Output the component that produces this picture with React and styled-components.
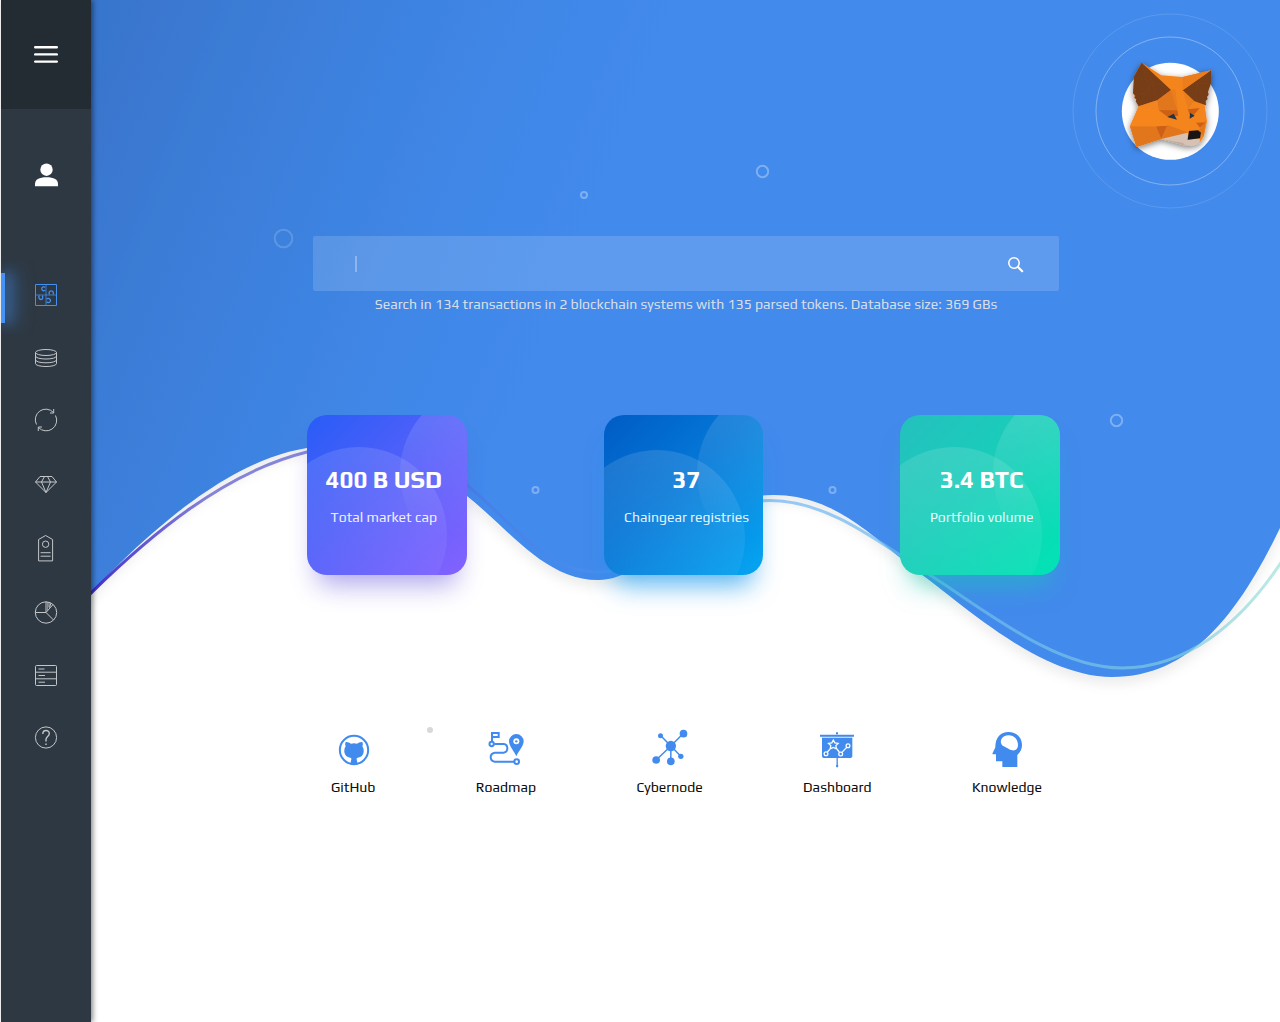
import React from "react";
import styled, { createGlobalStyle, css } from "styled-components";

const GlobalStyle = createGlobalStyle`
  * { box-sizing: border-box; }
  body {
    margin: 0;
    background: #fff;
    font-family: Play, "Noto Sans", "Open Sans", sans-serif;
  }
`;

const Shell = styled.div`
  display: flex;
  height: 1022px;
  padding-left: 1px;
  overflow: hidden;
`;

const Sidebar = styled.aside`
  position: relative;
  z-index: 2;
  flex: 0 0 90px;
  display: flex;
  flex-direction: column;
  background: #2e3842;
  box-shadow: 2px 0 5px rgba(0, 0, 0, 0.45);
`;

const MenuButton = styled.button`
  display: flex;
  align-items: center;
  justify-content: center;
  height: 109px;
  padding: 0;
  border: 0;
  background: #242c33;
`;

const Profile = styled.div`
  display: flex;
  align-items: center;
  justify-content: center;
  height: 132px;
  margin-bottom: 22px;
`;

const SideNav = styled.nav`
  display: flex;
  flex-direction: column;
`;

const SideItem = styled.a`
  display: flex;
  align-items: center;
  justify-content: center;
  height: 63px;
  color: #c3c6c8;
  ${(p) =>
    p.$active &&
    css`
      color: #4290f2;
      &::before {
        content: "";
        position: absolute;
        left: 0;
        width: 4px;
        height: 50px;
        background: #4593f7;
        box-shadow:
          4px 0 12px rgba(69, 147, 247, 0.7),
          6px 0 20px 2px rgba(69, 147, 247, 0.55);
        clip-path: inset(-12px -40px -12px 0);
        transform: translateY(3px);
      }
    `}
`;

const LineIcon = styled.svg`
  width: 28px;
  height: 32px;
  fill: none;
  stroke: currentColor;
  stroke-width: 1;
  overflow: visible;
`;

const Main = styled.main`
  position: relative;
  flex: 1;
`;

const Backdrop = styled.svg`
  position: absolute;
  inset: 0;
  width: 1189px;
  height: 1022px;
`;

const Content = styled.div`
  position: relative;
  display: flex;
  flex-direction: column;
`;

const Header = styled.header`
  display: flex;
  justify-content: flex-end;
  height: 220px;
`;

const Column = styled.div`
  display: flex;
  flex-direction: column;
  width: 753px;
  margin: 16px 0 0 216px;
`;

const SearchBox = styled.div`
  display: flex;
  align-items: center;
  justify-content: space-between;
  width: 746px;
  height: 55px;
  margin-left: 6px;
  padding: 1px 35px 0 42px;
  border-radius: 2px;
  background: rgba(255, 255, 255, 0.15);
`;

const Caret = styled.span`
  width: 2px;
  height: 16px;
  background: rgba(255, 255, 255, 0.3);
`;

const Hint = styled.p`
  margin: 3px 0 0 6px;
  width: 746px;
  height: 20px;
  line-height: 20px;
  text-align: center;
  white-space: nowrap;
  font-size: 14px;
  color: #d9dee6;
`;

const Cards = styled.div`
  display: flex;
  justify-content: space-between;
  margin-top: 101px;
`;

const Card = styled.article`
  position: relative;
  overflow: hidden;
  display: flex;
  flex-direction: column;
  align-items: center;
  width: 159.6px;
  height: 159.6px;
  padding: 49px ${(p) => p.$right}px 0 ${(p) => p.$left}px;
  border-radius: 20px;
  color: #fff;
  white-space: nowrap;
  background: linear-gradient(135deg, ${(p) => p.$colors});
  box-shadow: 0 20px 26px -10px ${(p) => p.$glow};

  &::before,
  &::after {
    content: "";
    position: absolute;
    width: 176px;
    height: 176px;
    border-radius: 50%;
  }
  &::before {
    left: ${(p) => p.$arcLeft}px;
    top: ${(p) => p.$arc}px;
    background: linear-gradient(to bottom, rgba(255, 255, 255, 0.12), rgba(255, 255, 255, 0.04) 75%);
  }
  &::after {
    left: 93px;
    top: -30px;
    background: linear-gradient(to bottom, rgba(255, 255, 255, 0.12) 20%, rgba(255, 255, 255, 0) 85%);
  }
`;

const CardValue = styled.strong`
  position: relative;
  z-index: 1;
  height: 32px;
  line-height: 32px;
  font-size: 24px;
  font-weight: 700;
`;

const CardLabel = styled.span`
  position: relative;
  z-index: 1;
  margin-top: 11px;
  line-height: 20px;
  font-size: 14px;
  color: rgba(255, 255, 255, 0.9);
`;

const Links = styled.nav`
  display: flex;
  gap: 100.7px;
  margin: 153px 0 0 24.2px;
`;

const LinkItem = styled.a`
  display: flex;
  flex-direction: column;
  align-items: center;
  width: ${(p) => p.$width}px;
  color: #0b0b0b;
  font-size: 14px;
  line-height: 20px;
  white-space: nowrap;
`;

const LinkIcon = styled.svg`
  width: 40px;
  height: 42px;
  margin-bottom: 7px;
  overflow: visible;
  color: #428bee;
  fill: currentColor;
`;

const sideIcons = [
  {
    name: "Apps",
    shift: 0,
    art: (
      <>
        <path d="M-10.5-10.5h21v21h-21z" />
        <path d="M-10.500 0h21M0-10.500v21" opacity=".75" />
        <path d="M-1-7.500c-1-1.200-3.300-.6-3.300 1.300s2.500 2.600 3.300 1.200M3.500-.5C2.500-2 3.300-4.200 5.200-4.200S8-2 7-.5M-6.500.5C-8 2-6.800 4.500-5 4.500S-2.500 2-4 .5M.5 4C2 2.800 4.500 3.500 4.500 5.500S2 8.200.5 6.800" strokeWidth="1.300" />
      </>
    ),
  },
  {
    name: "Data",
    shift: 0,
    art: (
      <>
        <ellipse cy="-5.500" rx="10.500" ry="3" />
        <path d="M-10.500-5.500v11c0 4 21 4 21 0v-11M-10.500-2c0 4 21 4 21 0M-10.500 1.800c0 4 21 4 21 0" />
      </>
    ),
  },
  {
    name: "Sync",
    shift: -1,
    art: <path d="M7.500-7.500A10.500 10.500 0 0 0-9.500 4.500M-7.500 7.500A10.500 10.500 0 0 0 9.500-4.500M7.700-11v4H4M-7.700 11V7H-4" />,
  },
  {
    name: "Assets",
    shift: 0.5,
    art: <path d="M-6-8H6l4.500 5.500L0 8-10.500-2.500zM-10.500-2.500h21M-1.500-8L-4.500-2.500 0 8 4.500-2.500 1.500-8" />,
  },
  {
    name: "Token",
    shift: 1.2,
    art: (
      <g transform="translate(-.4 0)">
        <path d="M0-12.700l7 4v21.400H-7V-8.700zM-5 4.500H5M-5 8H5" />
        <circle cy="-4" r="3.200" />
      </g>
    ),
  },
  {
    name: "Portfolio",
    shift: 2.5,
    art: (
      <>
        <circle r="10.700" />
        <path d="M-10.700 0H0L7.500 7.500M0-10.700V0l7-8M3-5v-5.500M5-9.500L3.500-5" />
        <path d="M1.500-10.500V-2" opacity=".6" />
      </>
    ),
  },
  {
    name: "Nodes",
    shift: 2.5,
    art: (
      <>
        <rect x="-10.500" y="-10" width="21" height="20" rx="1" />
        <path d="M-10.500-3.300h21M-10.500 3.300h21M-7.500-6.500h6M-7.500 0h6.500M-7.500 6.700h6.500" />
      </>
    ),
  },
  {
    name: "Help",
    shift: 1.5,
    art: (
      <>
        <circle r="10.600" />
        <path d="M-3.200-3.500c0-4.500 6.500-4.500 6.500-.5C3.300-1 0-1 0 2v2M0 6v1.500" strokeWidth="1.400" />
      </>
    ),
  },
];

const cards = [
  { value: "400 B USD", label: "Total market cap", colors: "#285cf7, #4d5ff9 40%, #8462ff", glow: "rgba(92,75,215,.48)", arc: 32, arcLeft: -36, left: 0, right: 6 },
  { value: "37", label: "Chaingear registries", colors: "#005cc5, #0477d7 45%, #06a6f2", glow: "rgba(16,150,235,.7)", arc: 35, arcLeft: -35, left: 6, right: 0 },
  { value: "3.4 BTC", label: "Portfolio volume", colors: "#25c0be, #17cfb9 50%, #01e4b4", glow: "rgba(20,205,175,.5)", arc: 32, arcLeft: -34, left: 3, right: 0 },
];

const links = [
  {
    label: "GitHub",
    width: 44,
    art: (
      <>
        <circle cx="63" cy="66" r="42.500" fill="none" stroke="currentColor" strokeWidth="6" />
        <path d="M38 42q9-1 16 5 9-2 18 0 7-6 16-5 3 7 0 13 5 6 4 17-2 15-18 17-4 1-3 5l3 15H52l3-15q1-4-3-5-16-2-18-17-1-11 4-17-3-6 0-13z" />
      </>
    ),
  },
  {
    label: "Roadmap",
    width: 60,
    art: (
      <>
        <g fill="none" stroke="currentColor" strokeWidth="6">
          <path d="M18 39V15h20v12H18M25 48h28q11 1 11 13t-11 13H26q-12 2-12 14t12 13h59" />
          <circle cx="17" cy="48" r="6.500" />
          <circle cx="92" cy="101" r="7" />
        </g>
        <path d="M91 85C84 69 69 54 69 40a22 22 0 0 1 44 0c0 14-15 29-22 45z" />
        <circle cx="91" cy="40" r="9" fill="#fff" />
        <circle cx="91" cy="40" r="3.500" />
      </>
    ),
  },
  {
    label: "Cybernode",
    width: 66,
    art: (
      <g transform="translate(-1.500 0)">
        <path d="M64 54L34 23M64 54l38-38M64 54L20 96M64 54v46M64 54l30 31" stroke="currentColor" strokeWidth="4.500" />
        <circle cx="64" cy="54" r="15.500" />
        <circle cx="33" cy="23" r="7.500" />
        <circle cx="102" cy="17" r="11.500" />
        <circle cx="20" cy="96" r="11.500" />
        <circle cx="64" cy="100" r="11.500" />
        <circle cx="94" cy="85" r="8" />
      </g>
    ),
  },
  {
    label: "Dashboard",
    width: 68,
    art: (
      <>
        <path d="M57 13h6v6h-6zM9 20h102v6H9zM15 30h91v53q0 7-8 7H23q-8 0-8-7z" />
        <path d="M15 26h91v5H15z" opacity=".35" />
        <path d="M60.500 90v28" stroke="currentColor" strokeWidth="4" />
        <circle cx="60.500" cy="114" r="3.500" />
        <g fill="none" stroke="#fff" strokeWidth="3.800">
          <path d="M49 36l4.500 8.500 10 1.500-7 7 2 9.500-9.500-4.500-9.500 4.500 2-9.500-7-7 10-1.500zM31 72l10-11M57 60l10 12M75 73l14-15" />
          <circle cx="27" cy="77" r="5.700" />
          <circle cx="71" cy="78" r="5.700" />
          <circle cx="93" cy="53" r="5.700" />
        </g>
      </>
    ),
  },
  {
    label: "Knowledge",
    width: 70,
    art: (
      <>
        <path d="M65 12c24 0 40 17 40 39 0 12-5 22-14 30v36H46v-17H27V79H17c-2-3 2-6 8-21C25 29 40 12 65 12z" />
        <path d="M43 34c4-8 12-12 22-12 17 0 28 13 28 30 0 10-7 17-17 15-9-2-15-8-29-14-6-5-7-11-4-19z" fill="#fff" />
      </>
    ),
  },
];

function Waves() {
  return (
    <Backdrop viewBox="91 0 1189 1022" aria-hidden="true">
      <defs>
        <linearGradient id="sky" gradientUnits="userSpaceOnUse" x1="91" y1="0" x2="600" y2="200">
          <stop offset="0" stopColor="#3974cb" />
          <stop offset=".4" stopColor="#3c7fdb" />
          <stop offset=".75" stopColor="#4087e7" />
          <stop offset="1" stopColor="#428aec" />
        </linearGradient>
        <linearGradient id="line" gradientUnits="userSpaceOnUse" x1="91" y1="0" x2="1280" y2="0">
          <stop offset="0" stopColor="#311bc8" stopOpacity=".9" />
          <stop offset=".1" stopColor="#3b35c4" stopOpacity=".6" />
          <stop offset=".18" stopColor="#3f45c8" stopOpacity=".62" />
          <stop offset=".32" stopColor="#4c75e1" stopOpacity=".6" />
          <stop offset=".42" stopColor="#4c90ef" stopOpacity=".55" />
          <stop offset=".6" stopColor="#69b4f5" stopOpacity=".68" />
          <stop offset=".88" stopColor="#78c5e4" stopOpacity=".75" />
          <stop offset="1" stopColor="#91dcd4" stopOpacity=".62" />
        </linearGradient>
        <filter id="drop" x="-5%" y="-5%" width="110%" height="115%">
          <feDropShadow dx="0" dy="7" stdDeviation="6" floodColor="#000" floodOpacity=".075" />
        </filter>
      </defs>
      <path
        filter="url(#drop)"
        fill="url(#sky)"
        d="M60-30H1310V480L1280 528C1238 615 1190 677 1112 677 1045 677 975 615 925 577 880 545 840 495 774 495 690 495 655 580 598 580 545 580 510 530 467 496 430 463 375 438 307 448 230 460 150 530 91 593L60 620Z"
      />
      <path
        fill="none"
        stroke="url(#line)"
        strokeWidth="3"
        d="M89 595C150 535 225 472 307 452 370 438 425 455 467 485 515 525 545 572 598 572 660 572 690 500.500 770 500.500 830 501 880 543 930 575 985 610 1055 668 1122 668 1185 668 1240 625 1282 561"
      />
      <g fill="none" stroke="#fff" strokeOpacity=".32" strokeWidth="2">
        <circle cx="283.500" cy="238.500" r="8.800" strokeOpacity=".17" />
        <circle cx="762.500" cy="171.500" r="5.700" />
        <circle cx="584" cy="195" r="3" />
        <circle cx="535.500" cy="490" r="3" />
        <circle cx="832.500" cy="490" r="3" />
        <circle cx="1116.500" cy="420.500" r="5.700" />
      </g>
      <circle cx="430" cy="730" r="3" fill="#d8d8d8" />
    </Backdrop>
  );
}

function FoxBadge() {
  return (
    <svg width="220" height="220" viewBox="0 0 660 660" aria-label="Wallet">
      <defs>
        <filter id="foxShadow" x="-20%" y="-20%" width="140%" height="150%">
          <feDropShadow dx="0" dy="6" stdDeviation="9" floodColor="#000" floodOpacity=".5" />
        </filter>
      </defs>
      <circle cx="330" cy="333" r="291" fill="none" stroke="#fff" strokeOpacity=".13" strokeWidth="3" />
      <circle cx="330" cy="333" r="222" fill="none" stroke="#fff" strokeOpacity=".34" strokeWidth="3" />
      <circle cx="331" cy="334" r="145.500" fill="#fff" />
      <g filter="url(#foxShadow)">
        <path fill="#f4841d" d="M245 188L304 226 368 231 453 211 448 256 434 316 441 364 432 408 418 430 380 437 304 417 229 441 210 379 236 319 220 282 222 229z" />
        <path fill="#763d16" d="M245 188L333 270 292 301 236 319 227 304 229 298 223 293 226 287 219 280 222 229z" />
        <path fill="#763d16" d="M453 211L453 250 444 275 446 284 441 291 443 297 437 303 438 316 402 303 368 271z" />
        <path fill="#ec7d1d" d="M368 231L453 211 368 271z" />
        <path fill="#e2761b" d="M333 270L292 301 296 329 352 331zM229 441L210 379 288 379 304 417z" />
        <path fill="#f28420" d="M292 301L236 319 296 330z" />
        <path fill="#ea7d1e" d="M333 270L346 268 354 332zM368 271L402 303 385 328z" />
        <path fill="#cd6116" d="M296 330L352 331 355 347 325 352zM383 328L419 324 402 344 390 345zM288 379L323 377 304 417z" />
        <path fill="#e2761b" d="M438 360L430 408 416 392z" />
        <path fill="#cd6116" d="M408 368L436 367 420 383z" />
        <path fill="#f6861d" d="M236 319L296 330 323 377 288 379 210 379z" />
        <path fill="#e2761b" d="M322 375L383 397 304 417z" />
        <path fill="#233447" d="M322 351L341 341 351 359zM390 338L404 347 389 356z" />
        <path fill="#d7c1b3" d="M304 417L384 398 383 419 420 415 419 429 405 435 378 437z" />
        <path fill="#c0ad9e" d="M304 418L368 428 378 437z" />
        <path fill="#161616" d="M387 393L414 391 423 398 420 415 383 419z" />
        <path fill="none" stroke="#8d4b20" strokeOpacity=".6" strokeWidth="1" d="M245 188L278 245 333 270M222 229L278 245 292 301M278 245L236 319M245 188L270 278 223 283M453 211L412 250 438 316M412 250L368 271M412 250L453 250M412 250L402 303" />
      </g>
    </svg>
  );
}

export default function App() {
  return (
    <>
      <GlobalStyle />
      <Shell>
        <Sidebar>
          <MenuButton aria-label="Menu">
            <svg width="24" height="19" viewBox="0 0 24 19" stroke="#fff" strokeWidth="2.400" strokeLinecap="round">
              <path d="M1.200 2.200h21.600M1.200 9.400h21.600M1.200 16.600h21.600" />
            </svg>
          </MenuButton>
          <Profile>
            <svg width="24" height="24" viewBox="0 0 24 24" fill="#fff">
              <circle cx="12.500" cy="6.700" r="6.200" />
              <path d="M1 23.300v-2c0-5 4-7 11.500-7S24 16.300 24 21.300v2z" />
            </svg>
          </Profile>
          <SideNav>
            {sideIcons.map((item) => (
              <SideItem key={item.name} aria-label={item.name} $active={item.name === "Apps"}>
                <LineIcon viewBox="-14 -16 28 32">
                  <g transform={`translate(0 ${item.shift})`}>{item.art}</g>
                </LineIcon>
              </SideItem>
            ))}
          </SideNav>
        </Sidebar>
        <Main>
          <Waves />
          <Content>
            <Header>
              <FoxBadge />
            </Header>
            <Column>
              <SearchBox>
                <Caret />
                <svg width="17" height="17" viewBox="0 0 17 17" fill="none" stroke="#fff">
                  <circle cx="7" cy="7" r="5.200" strokeWidth="1.500" />
                  <path d="M11 11l4.200 4.200" strokeWidth="2.200" strokeLinecap="round" />
                </svg>
              </SearchBox>
              <Hint>Search in 134 transactions in 2 blockchain systems with 135 parsed tokens. Database size: 369 GBs</Hint>
              <Cards>
                {cards.map((c) => (
                  <Card
                    key={c.label}
                    $colors={c.colors}
                    $glow={c.glow}
                    $arc={c.arc}
                    $arcLeft={c.arcLeft}
                    $left={c.left}
                    $right={c.right}
                  >
                    <CardValue>{c.value}</CardValue>
                    <CardLabel>{c.label}</CardLabel>
                  </Card>
                ))}
              </Cards>
              <Links>
                {links.map((l) => (
                  <LinkItem key={l.label} $width={l.width}>
                    <LinkIcon viewBox="0 0 120 126">{l.art}</LinkIcon>
                    {l.label}
                  </LinkItem>
                ))}
              </Links>
            </Column>
          </Content>
        </Main>
      </Shell>
    </>
  );
}
